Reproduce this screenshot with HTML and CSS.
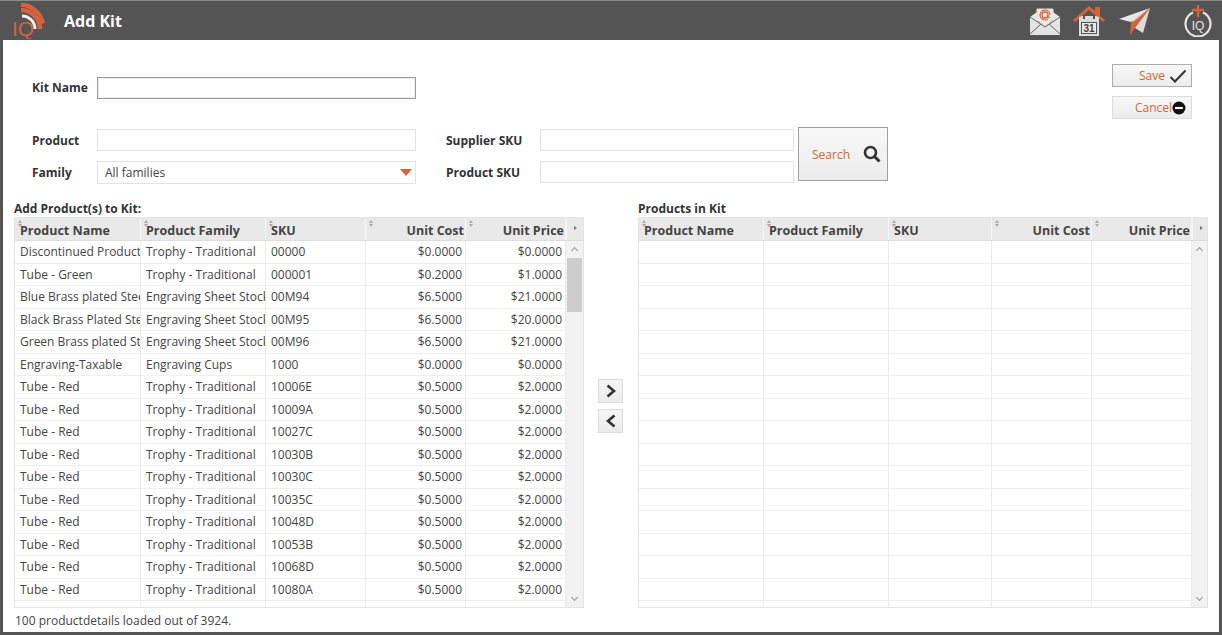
FILE: index.html
```html
<!DOCTYPE html>
<html lang="en">
<head>
<meta charset="utf-8">
<title>Add Kit</title>
<link rel="stylesheet" href="styles.css">
</head>
<body>
<div class="app">
  <header class="topbar">
    <svg class="logo" width="42" height="36" viewBox="0 0 42 36">
      <text x="7" y="33" class="logo-text">IQ</text>
      <path d="M17 13a13 13 0 0 1 13 13" class="arc thin"/>
      <path d="M16 7a19 19 0 0 1 19 19" class="arc"/>
      <path d="M16 1.500a24.500 24.500 0 0 1 22 19" class="arc"/>
    </svg>
    <h1 class="title">Add Kit</h1>
    <div class="top-icons">
      <svg class="ic-mail" width="32" height="30" viewBox="0 0 32 30">
        <path d="M8 14V3h16v11l-8 6z" fill="#f6e9e3" stroke="#ddd"/>
        <circle cx="16" cy="9" r="3" fill="none" stroke="#d4623c" stroke-width="1.300"/>
        <path d="M19 9v1.500q0 1.500 1.500.5M21 9a5 5 0 1 0-2 4" fill="none" stroke="#d4623c" stroke-width="1.200"/>
        <path d="M1 11l7-5v9l8 5 8-5V6l7 5v18H1z" fill="#e4e4e4"/>
        <path d="M1 28l11-10M31 28L20 18M1 11l15 10 15-10" stroke="#666" stroke-width="1" fill="none"/>
      </svg>
      <svg class="ic-cal" width="34" height="32" viewBox="0 0 34 32">
        <path d="M1 15L17 1l6 5V2h5v9l5 4-2 2L17 5 3 17z" fill="#d4623c"/>
        <path d="M7 12l3-1h14l3 1v19H7z" fill="#dcdcdc"/>
        <rect x="9" y="17" width="16" height="12" fill="#555"/>
        <rect x="10" y="18" width="14" height="10" fill="#e8e8e8"/>
        <path d="M12 9v5M22 9v5" stroke="#555" stroke-width="2"/>
        <text x="17" y="27" class="cal-text">31</text>
      </svg>
      <svg class="ic-plane" width="33" height="30" viewBox="0 0 33 30">
        <path d="M1 13L32 2 13 16z" fill="#e8e8e8"/>
        <path d="M32 2L13 16l-1 13 5-7z" fill="#d4623c"/>
        <path d="M32 2L17 22l8 5z" fill="#dcdcdc"/>
        <path d="M32 2L13 16l3-1z" fill="#fff"/>
      </svg>
      <svg class="ic-iq" width="30" height="32" viewBox="0 0 30 32">
        <path d="M10 7.500a12.500 12.500 0 1 0 10 0" fill="none" stroke="#e6e6e6" stroke-width="2.200"/>
        <path d="M15 0v12M9 5h12" stroke="#d4623c" stroke-width="2.400"/>
        <text x="15" y="25" class="iq-text">IQ</text>
      </svg>
    </div>
  </header>

  <main class="content">
    <section class="top">
      <div class="fields">
        <div class="kit-row">
          <label class="label">Kit Name</label>
          <input class="input kit-input" type="text">
        </div>
        <div class="search-row">
          <div class="search-col">
            <div class="field-line">
              <label class="label">Product</label>
              <input class="input" type="text">
            </div>
            <div class="field-line">
              <label class="label">Family</label>
              <div class="select">All families<span class="caret"></span></div>
            </div>
          </div>
          <div class="search-col sku-col">
            <div class="field-line">
              <label class="label sku-label">Supplier SKU</label>
              <input class="input sku-input" type="text">
            </div>
            <div class="field-line">
              <label class="label sku-label">Product SKU</label>
              <input class="input sku-input" type="text">
            </div>
          </div>
          <button class="btn search-btn">Search
            <svg width="18" height="18" viewBox="0 0 18 18"><circle cx="7.500" cy="7.500" r="5.500" fill="none" stroke="#333" stroke-width="2.600"/><path d="M11.500 11.500l5 5" stroke="#333" stroke-width="3"/></svg>
          </button>
        </div>
      </div>
      <div class="actions">
        <button class="btn action save">Save
          <svg width="18" height="14" viewBox="0 0 18 14"><path d="M1.500 8l4.500 4.500L16.500 1.500" fill="none" stroke="#333" stroke-width="2"/></svg>
        </button>
        <button class="btn action cancel">Cancel
          <svg width="16" height="16" viewBox="0 0 16 16"><circle cx="8" cy="8" r="7.500" fill="#111"/><rect x="3.500" y="6.800" width="9" height="2.400" fill="#fff"/></svg>
        </button>
      </div>
    </section>

    <section class="panels">
      <div class="panel">
        <h2 class="panel-title">Add Product(s) to Kit:</h2>
        <div class="grid left-grid">
          <div class="grid-head">
            <div class="th"><i class="sort"></i>Product Name</div>
            <div class="th"><i class="sort"></i>Product Family</div>
            <div class="th"><i class="sort"></i>SKU</div>
            <div class="th num"><i class="sort"></i>Unit Cost</div>
            <div class="th num"><i class="sort"></i>Unit Price</div>
            <div class="th corner"><i class="tri"></i></div>
          </div>
          <div class="grid-body">
            <div class="rows" id="left-rows"></div>
            <div class="scrollbar">
              <span class="chev up"></span>
              <span class="thumb"></span>
              <span class="chev down"></span>
            </div>
          </div>
        </div>
        <p class="status">100 productdetails loaded out of 3924.</p>
      </div>

      <div class="arrows">
        <button class="arrow-btn"><svg width="12" height="14" viewBox="0 0 12 14"><path d="M2.500 1.500L9 7l-6.500 5.500" fill="none" stroke="#333" stroke-width="2.600"/></svg></button>
        <button class="arrow-btn"><svg width="12" height="14" viewBox="0 0 12 14"><path d="M9.500 1.500L3 7l6.500 5.500" fill="none" stroke="#333" stroke-width="2.600"/></svg></button>
      </div>

      <div class="panel">
        <h2 class="panel-title">Products in Kit</h2>
        <div class="grid right-grid">
          <div class="grid-head">
            <div class="th"><i class="sort"></i>Product Name</div>
            <div class="th"><i class="sort"></i>Product Family</div>
            <div class="th"><i class="sort"></i>SKU</div>
            <div class="th num"><i class="sort"></i>Unit Cost</div>
            <div class="th num"><i class="sort"></i>Unit Price</div>
            <div class="th corner"><i class="tri"></i></div>
          </div>
          <div class="grid-body">
            <div class="rows" id="right-rows"></div>
            <div class="scrollbar">
              <span class="chev up"></span>
              <span class="chev down"></span>
            </div>
          </div>
        </div>
      </div>
    </section>
  </main>
</div>
<script src="app.js"></script>
</body>
</html>
```
FILE: app.js
```js
var data = [
  ["Discontinued Product", "Trophy - Traditional", "00000", "$0.0000", "$0.0000"],
  ["Tube - Green", "Trophy - Traditional", "000001", "$0.2000", "$1.0000"],
  ["Blue Brass plated Steel", "Engraving Sheet Stock", "00M94", "$6.5000", "$21.0000"],
  ["Black Brass Plated Steel", "Engraving Sheet Stock", "00M95", "$6.5000", "$20.0000"],
  ["Green Brass plated Steel", "Engraving Sheet Stock", "00M96", "$6.5000", "$21.0000"],
  ["Engraving-Taxable", "Engraving Cups", "1000", "$0.0000", "$0.0000"]
];
["10006E", "10009A", "10027C", "10030B", "10030C", "10035C", "10048D", "10053B", "10068D", "10080A"].forEach(function (s) {
  data.push(["Tube - Red", "Trophy - Traditional", s, "$0.5000", "$2.0000"]);
});
function fill(id, rows) {
  var host = document.getElementById(id);
  rows.forEach(function (r) {
    var row = document.createElement("div");
    row.className = "row";
    r.forEach(function (v, i) {
      var c = document.createElement("div");
      c.className = i > 2 ? "td num" : "td";
      c.textContent = v;
      row.appendChild(c);
    });
    host.appendChild(row);
  });
  var tail = document.createElement("div");
  tail.className = "row tail";
  for (var i = 0; i < 5; i++) {
    var c = document.createElement("div");
    c.className = "td";
    tail.appendChild(c);
  }
  host.appendChild(tail);
}
fill("left-rows", data);
fill("right-rows", data.map(function () { return ["", "", "", "", ""]; }));
```
FILE: styles.css
```css
* { box-sizing: border-box; }
html, body { margin: 0; padding: 0; height: 100%; overflow: hidden; }
body { font-family: "Open Sans", "Liberation Sans", sans-serif; font-size: 12px; color: #444; background: #fff; }

.app {
  width: 1222px; height: 635px;
  display: flex; flex-direction: column;
  border-left: 3px solid #555; border-right: 3px solid #555; border-bottom: 3px solid #555;
  background: #fff;
}

.topbar {
  height: 40px; margin: 0 -3px; flex: none;
  display: flex; align-items: center;
  background: #545454; border-top: 1px solid #8a8a8a;
  padding: 0 9px 0 5px;
}
.logo { flex: none; margin-top: 1px; }
.logo-text { font: 400 21px "Liberation Sans", sans-serif; fill: #d4623c; }
.arc { fill: none; stroke: #d4623c; stroke-width: 4.500; }
.arc.thin { stroke: #eee; stroke-width: 3; }
.title { margin: 0 0 0 17px; font-size: 16px; font-weight: 700; color: #fff; }
.top-icons { margin-left: auto; display: flex; align-items: center; }
.ic-mail { margin-right: 11px; }
.ic-cal { margin-right: 12px; }
.ic-plane { margin-right: 32px; }
.ic-iq { margin-top: 1px; }
.cal-text { font: 700 10px "Liberation Sans", sans-serif; fill: #444; text-anchor: middle; }
.iq-text { font: 400 12px "Liberation Sans", sans-serif; fill: #e6e6e6; text-anchor: middle; }

.content { flex: 1; min-height: 0; display: flex; flex-direction: column; padding: 0 11px 0 11px; }

.top { height: 160px; flex: none; display: flex; justify-content: space-between; }
.fields { padding: 37px 0 0 18px; }
.kit-row { display: flex; align-items: center; height: 21px; }
.label { width: 65px; flex: none; font-weight: 700; color: #333; font-size: 12px; }
.input { display: block; width: 319px; height: 22px; border: 1px solid #e2e2e2; background: #fff; padding: 0 6px; outline: none; font: inherit; }
.kit-input { height: 22px; border: 1px solid #9a9a9a; box-shadow: inset 0 0 0 1px #f0f0f0; }
.kit-input { position: relative; }

.search-row { display: flex; margin-top: 29px; }
.search-col { display: flex; flex-direction: column; gap: 10px; padding-top: 2px; }
.field-line { display: flex; align-items: center; height: 22px; }
.sku-col { margin-left: 30px; }
.sku-label { width: 94px; }
.sku-input { width: 254px; }
.select {
  width: 319px; height: 23px; border: 1px solid #e2e2e2; background: #fff;
  display: flex; align-items: center; justify-content: space-between; padding: 0 2px 0 7px;
  color: #444;
}
.caret { width: 0; height: 0; border-left: 6px solid transparent; border-right: 6px solid transparent; border-top: 7px solid #d4623c; margin-right: 1px; }

.btn {
  display: flex; align-items: center; justify-content: space-between;
  font: inherit; color: #d4623c; background: linear-gradient(#f8f8f8, #ececec);
  border: 1px solid #b4b4b4; padding: 0;
}
.search-btn { width: 90px; height: 54px; margin-left: 4px; padding: 0 6px 0 13px; border-color: #a0a0a0; }
.actions { padding-top: 24px; margin-right: 16px; display: flex; flex-direction: column; gap: 9px; }
.action { width: 80px; height: 23px; }
.save { padding: 0 4px 0 26px; border-color: #adadad; border-width: 1px; }
.cancel { padding: 0 5px 0 22px; border-color: #dcdcdc; }

.panels { flex: 1; min-height: 0; display: flex; align-items: flex-start; }
.panel { flex: none; }
.panel-title { margin: 0; height: 17px; font-size: 12px; line-height: 17px; font-weight: 700; color: #333; }

.grid { border: 1px solid #e4e4e4; height: 391px; display: flex; flex-direction: column; overflow: hidden; }
.left-grid { width: 570px; }
.right-grid { width: 570px; }
.grid-head { display: flex; height: 23px; flex: none; background: #e9e9e9; border-bottom: 1px solid #dedede; }
.th {
  position: relative; height: 100%; padding: 4px 2px 0 5px;
  font-weight: 700; color: #444; font-size: 12.500px; line-height: 17px; white-space: nowrap;
  border-right: 1px solid #f6f6f6;
}
.th.num { text-align: right; padding-right: 1px; }
.th.corner { padding: 0; border-right: 0; border-left: 1px solid #f6f6f6; }
.sort {
  position: absolute; left: 3px; top: 2px; width: 0; height: 0;
  border-left: 2px solid transparent; border-right: 2px solid transparent; border-bottom: 3px solid #a9a9a9;
}
.sort::after {
  content: ""; position: absolute; left: -2px; top: 4px; width: 0; height: 0;
  border-left: 2px solid transparent; border-right: 2px solid transparent; border-top: 3px solid #a9a9a9;
}
.tri {
  position: absolute; left: 7px; top: 8px; width: 0; height: 0;
  border-top: 2.500px solid transparent; border-bottom: 2.500px solid transparent; border-left: 3px solid #777;
}

.left-grid .th:nth-child(1), .left-grid .td:nth-child(1) { width: 126px; }
.left-grid .th:nth-child(2), .left-grid .td:nth-child(2) { width: 125px; }
.left-grid .th:nth-child(3), .left-grid .td:nth-child(3) { width: 100px; }
.left-grid .th:nth-child(4), .left-grid .td:nth-child(4) { width: 100px; }
.left-grid .th:nth-child(5), .left-grid .td:nth-child(5) { width: 100px; }
.left-grid .th.corner { width: 17px; }
.right-grid .th:nth-child(1), .right-grid .td:nth-child(1) { width: 125px; }
.right-grid .th:nth-child(2), .right-grid .td:nth-child(2) { width: 125px; }
.right-grid .th:nth-child(3), .right-grid .td:nth-child(3) { width: 103px; }
.right-grid .th:nth-child(4), .right-grid .td:nth-child(4) { width: 100px; }
.right-grid .th:nth-child(5), .right-grid .td:nth-child(5) { width: 100px; }
.right-grid .th.corner { width: 15px; }

.grid-body { flex: 1; min-height: 0; display: flex; }
.rows { flex: 1; min-width: 0; overflow: hidden; }
.row { display: flex; height: 22.500px; border-bottom: 1px solid #efefef; }
.row.tail { border-bottom: 0; }
.td {
  height: 100%; padding: 0 2px 0 5px; line-height: 22px; white-space: nowrap; overflow: hidden; flex: none;
  border-right: 1px solid #ececec; color: #444;
}
.td.num { text-align: right; padding-right: 3px; }

.scrollbar { position: relative; flex: none; width: 17px; background: #f2f2f2; }
.right-grid .scrollbar { width: 15px; }
.thumb { position: absolute; left: 1px; right: 1px; top: 17px; height: 54px; background: #cdcdcd; }
.chev { position: absolute; left: 50%; width: 5px; height: 5px; margin-left: -2.500px; border-left: 1px solid #999; border-top: 1px solid #999; }
.chev.up { top: 7px; transform: rotate(45deg); }
.chev.down { bottom: 7px; transform: rotate(225deg); }

.status { margin: 5px 0 0 1px; font-size: 12px; line-height: 16px; color: #444; }

.arrows { flex: none; width: 54px; padding: 179px 0 0 14px; display: flex; flex-direction: column; gap: 6px; }
.arrow-btn {
  width: 25px; height: 24px; padding: 0; display: flex; align-items: center; justify-content: center;
  background: linear-gradient(#f6f6f6, #ececec); border: 1px solid #dcdcdc;
}
```
